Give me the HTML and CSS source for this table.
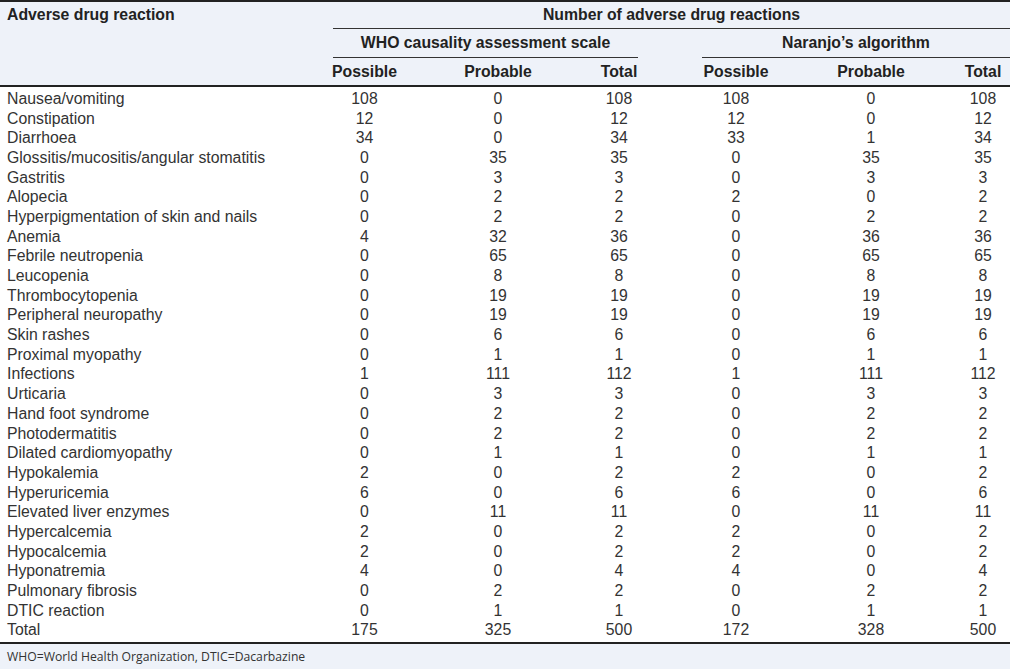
FILE: index.html
```html
<!DOCTYPE html>
<html>
<head>
<meta charset="utf-8">
<link rel="stylesheet" href="styles.css">
</head>
<body>
<div class="table">
  <div class="head">
    <div class="h-name">Adverse drug reaction</div>
    <div class="h-num">Number of adverse drug reactions</div>
    <div class="h-who">WHO causality assessment scale</div>
    <div class="h-nar">Naranjo’s algorithm</div>
    <div class="h-sub c1">Possible</div>
    <div class="h-sub c2">Probable</div>
    <div class="h-sub c3">Total</div>
    <div class="h-sub c4">Possible</div>
    <div class="h-sub c5">Probable</div>
    <div class="h-sub c6">Total</div>
  </div>
  <div class="body" id="body">
    <div class="row"><div class="name">Nausea/vomiting</div><div class="v c1">108</div><div class="v c2">0</div><div class="v c3">108</div><div class="v c4">108</div><div class="v c5">0</div><div class="v c6">108</div></div>
    <div class="row"><div class="name">Constipation</div><div class="v c1">12</div><div class="v c2">0</div><div class="v c3">12</div><div class="v c4">12</div><div class="v c5">0</div><div class="v c6">12</div></div>
    <div class="row"><div class="name">Diarrhoea</div><div class="v c1">34</div><div class="v c2">0</div><div class="v c3">34</div><div class="v c4">33</div><div class="v c5">1</div><div class="v c6">34</div></div>
    <div class="row"><div class="name">Glossitis/mucositis/angular stomatitis</div><div class="v c1">0</div><div class="v c2">35</div><div class="v c3">35</div><div class="v c4">0</div><div class="v c5">35</div><div class="v c6">35</div></div>
    <div class="row"><div class="name">Gastritis</div><div class="v c1">0</div><div class="v c2">3</div><div class="v c3">3</div><div class="v c4">0</div><div class="v c5">3</div><div class="v c6">3</div></div>
    <div class="row"><div class="name">Alopecia</div><div class="v c1">0</div><div class="v c2">2</div><div class="v c3">2</div><div class="v c4">2</div><div class="v c5">0</div><div class="v c6">2</div></div>
    <div class="row"><div class="name">Hyperpigmentation of skin and nails</div><div class="v c1">0</div><div class="v c2">2</div><div class="v c3">2</div><div class="v c4">0</div><div class="v c5">2</div><div class="v c6">2</div></div>
    <div class="row"><div class="name">Anemia</div><div class="v c1">4</div><div class="v c2">32</div><div class="v c3">36</div><div class="v c4">0</div><div class="v c5">36</div><div class="v c6">36</div></div>
    <div class="row"><div class="name">Febrile neutropenia</div><div class="v c1">0</div><div class="v c2">65</div><div class="v c3">65</div><div class="v c4">0</div><div class="v c5">65</div><div class="v c6">65</div></div>
    <div class="row"><div class="name">Leucopenia</div><div class="v c1">0</div><div class="v c2">8</div><div class="v c3">8</div><div class="v c4">0</div><div class="v c5">8</div><div class="v c6">8</div></div>
    <div class="row"><div class="name">Thrombocytopenia</div><div class="v c1">0</div><div class="v c2">19</div><div class="v c3">19</div><div class="v c4">0</div><div class="v c5">19</div><div class="v c6">19</div></div>
    <div class="row"><div class="name">Peripheral neuropathy</div><div class="v c1">0</div><div class="v c2">19</div><div class="v c3">19</div><div class="v c4">0</div><div class="v c5">19</div><div class="v c6">19</div></div>
    <div class="row"><div class="name">Skin rashes</div><div class="v c1">0</div><div class="v c2">6</div><div class="v c3">6</div><div class="v c4">0</div><div class="v c5">6</div><div class="v c6">6</div></div>
    <div class="row"><div class="name">Proximal myopathy</div><div class="v c1">0</div><div class="v c2">1</div><div class="v c3">1</div><div class="v c4">0</div><div class="v c5">1</div><div class="v c6">1</div></div>
    <div class="row"><div class="name">Infections</div><div class="v c1">1</div><div class="v c2">111</div><div class="v c3">112</div><div class="v c4">1</div><div class="v c5">111</div><div class="v c6">112</div></div>
    <div class="row"><div class="name">Urticaria</div><div class="v c1">0</div><div class="v c2">3</div><div class="v c3">3</div><div class="v c4">0</div><div class="v c5">3</div><div class="v c6">3</div></div>
    <div class="row"><div class="name">Hand foot syndrome</div><div class="v c1">0</div><div class="v c2">2</div><div class="v c3">2</div><div class="v c4">0</div><div class="v c5">2</div><div class="v c6">2</div></div>
    <div class="row"><div class="name">Photodermatitis</div><div class="v c1">0</div><div class="v c2">2</div><div class="v c3">2</div><div class="v c4">0</div><div class="v c5">2</div><div class="v c6">2</div></div>
    <div class="row"><div class="name">Dilated cardiomyopathy</div><div class="v c1">0</div><div class="v c2">1</div><div class="v c3">1</div><div class="v c4">0</div><div class="v c5">1</div><div class="v c6">1</div></div>
    <div class="row"><div class="name">Hypokalemia</div><div class="v c1">2</div><div class="v c2">0</div><div class="v c3">2</div><div class="v c4">2</div><div class="v c5">0</div><div class="v c6">2</div></div>
    <div class="row"><div class="name">Hyperuricemia</div><div class="v c1">6</div><div class="v c2">0</div><div class="v c3">6</div><div class="v c4">6</div><div class="v c5">0</div><div class="v c6">6</div></div>
    <div class="row"><div class="name">Elevated liver enzymes</div><div class="v c1">0</div><div class="v c2">11</div><div class="v c3">11</div><div class="v c4">0</div><div class="v c5">11</div><div class="v c6">11</div></div>
    <div class="row"><div class="name">Hypercalcemia</div><div class="v c1">2</div><div class="v c2">0</div><div class="v c3">2</div><div class="v c4">2</div><div class="v c5">0</div><div class="v c6">2</div></div>
    <div class="row"><div class="name">Hypocalcemia</div><div class="v c1">2</div><div class="v c2">0</div><div class="v c3">2</div><div class="v c4">2</div><div class="v c5">0</div><div class="v c6">2</div></div>
    <div class="row"><div class="name">Hyponatremia</div><div class="v c1">4</div><div class="v c2">0</div><div class="v c3">4</div><div class="v c4">4</div><div class="v c5">0</div><div class="v c6">4</div></div>
    <div class="row"><div class="name">Pulmonary fibrosis</div><div class="v c1">0</div><div class="v c2">2</div><div class="v c3">2</div><div class="v c4">0</div><div class="v c5">2</div><div class="v c6">2</div></div>
    <div class="row"><div class="name">DTIC reaction</div><div class="v c1">0</div><div class="v c2">1</div><div class="v c3">1</div><div class="v c4">0</div><div class="v c5">1</div><div class="v c6">1</div></div>
    <div class="row"><div class="name">Total</div><div class="v c1">175</div><div class="v c2">325</div><div class="v c3">500</div><div class="v c4">172</div><div class="v c5">328</div><div class="v c6">500</div></div>
  </div>
  <div class="foot">WHO=World Health Organization, DTIC=Dacarbazine</div>
</div>
</body>
</html>
```
FILE: styles.css
```css
html, body {
  margin: 0;
  padding: 0;
  background: #ffffff;
}
.table {
  width: 1010px;
  height: 669px;
  font-family: "Liberation Sans", Arial, sans-serif;
  font-size: 15.8px;
  color: #333333;
  display: flex;
  flex-direction: column;
}
.head, .row {
  display: grid;
  grid-template-columns: 333px 63px 204px 38px 64px 68px 202px 22px 16px;
}
.head {
  background: #eef2f9;
  border-top: 2px solid #222222;
  border-bottom: 2px solid #222222;
  grid-template-rows: 27px 29px 27px;
  font-weight: bold;
  color: #222222;
}
.head > div {
  display: flex;
  align-items: center;
  justify-content: center;
  white-space: nowrap;
}
.h-name {
  grid-column: 1 / 2;
  grid-row: 1 / 4;
  align-self: start;
  height: 26px;
  padding-left: 7px;
}
.head > .h-name {
  justify-content: flex-start;
}
.h-num {
  grid-column: 2 / 10;
  grid-row: 1;
  border-bottom: 1px solid #333333;
}
.h-who {
  grid-column: 2 / 5;
  grid-row: 2;
  border-bottom: 1px solid #333333;
}
.h-nar {
  grid-column: 6 / 10;
  grid-row: 2;
  border-bottom: 1px solid #333333;
}
.h-sub { grid-row: 3; }
.c1 { grid-column: 2; }
.c2 { grid-column: 3; }
.c3 { grid-column: 4; }
.c4 { grid-column: 6; }
.c5 { grid-column: 7; }
.c6 { grid-column: 8; }
.body {
  padding: 2px 0 2px 0;
}
.row {
  height: 19.7px;
  align-items: center;
}
.name {
  grid-column: 1;
  padding-left: 7px;
  white-space: nowrap;
}
.v {
  display: flex;
  justify-content: center;
  white-space: nowrap;
}
.foot {
  flex: 1;
  background: #eef2f9;
  border-top: 2px solid #222222;
  font-family: "Open Sans", "DejaVu Sans", sans-serif;
  font-size: 12.2px;
  color: #333333;
  padding-left: 7px;
  display: flex;
  align-items: center;
}
```
